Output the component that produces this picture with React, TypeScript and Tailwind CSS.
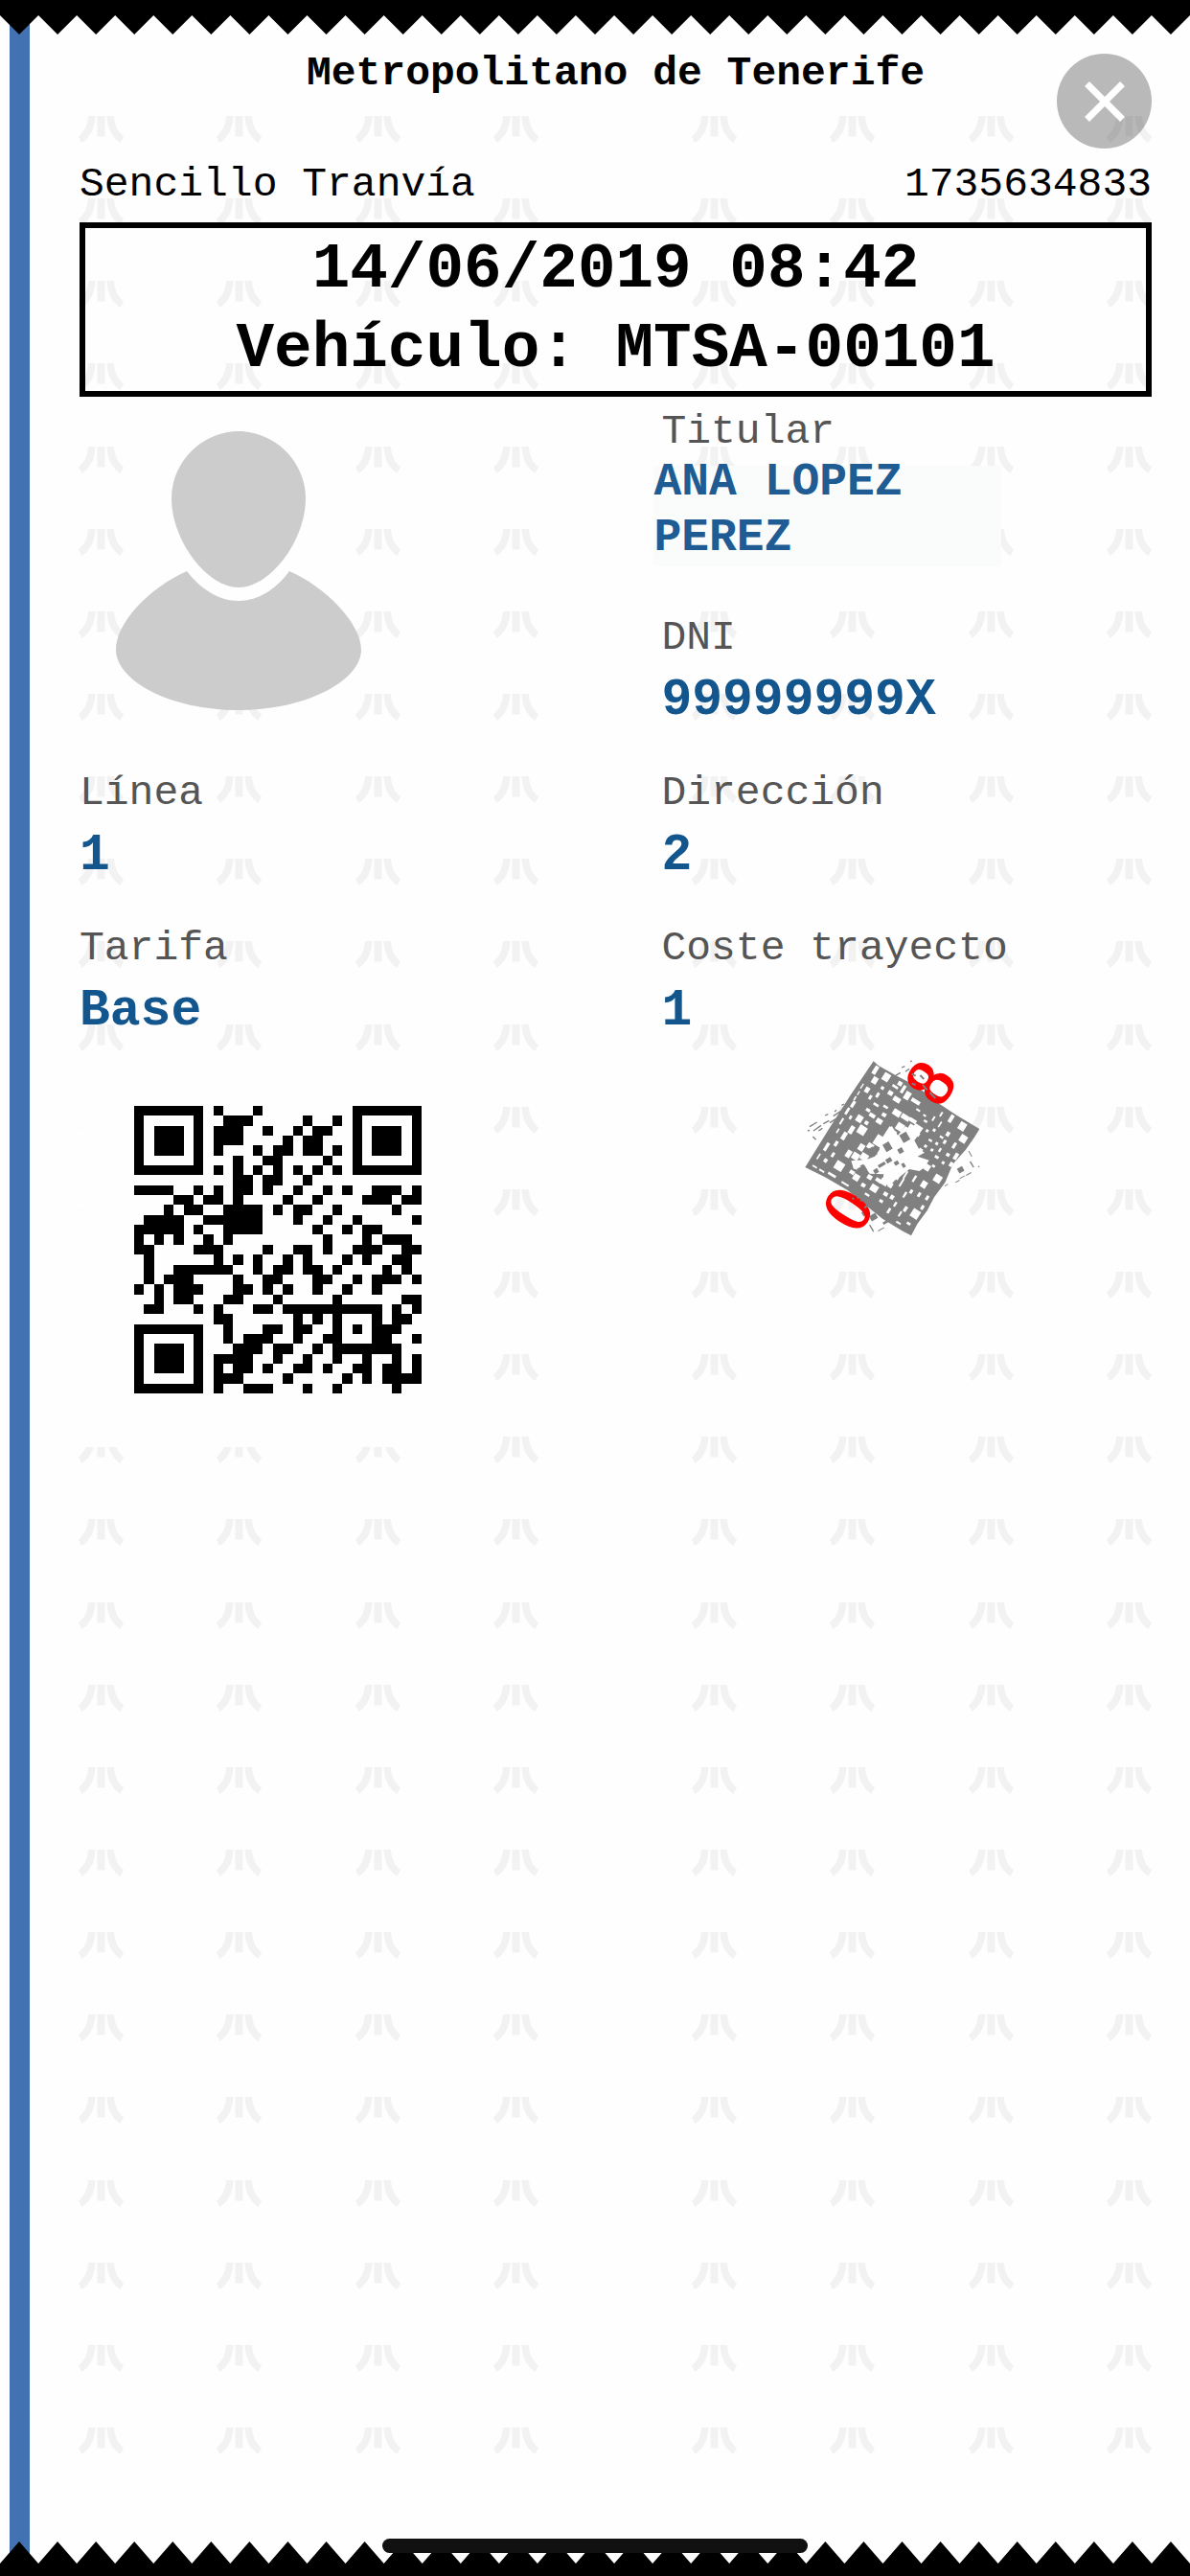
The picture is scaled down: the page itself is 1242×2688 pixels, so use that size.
import React from "react";

const TEETH = 31;

function zigzag(edge: number, tip: number) {
  let d = `M0 ${edge}`;
  for (let i = 0; i < TEETH; i++) d += `L${i * 40 + 20} ${tip}L${i * 40 + 40} ${edge}`;
  return d;
}

function TornEdge({ side }: { side: "top" | "bottom" }) {
  const d = side === "top" ? `${zigzag(16, 36)}V0H0Z` : `${zigzag(23, 0)}V36H0Z`;
  return (
    <svg viewBox="0 0 1240 36" preserveAspectRatio="none" className="block h-9 w-full" aria-hidden="true">
      <path d={d} fill="#000" />
    </svg>
  );
}

function Mark() {
  return (
    <svg viewBox="0 0 47 28" className="h-7 w-[47px]">
      <path
        fill="#f2f2f2"
        d="M10 0H17.5C17 12 13 21.5 3.5 28L0 21.5C6.5 16 9.5 9 10 0ZM19.5 0H27.5V21.5H19.5ZM29.5 0H37C37.5 9 40.5 16 47 21.5L43.5 28C34 21.5 30 12 29.5 0Z"
      />
    </svg>
  );
}

function Watermark() {
  const half = [0, 1, 2, 3];
  return (
    <div
      aria-hidden="true"
      className="absolute top-[121px] right-10 bottom-[127px] left-[82px] flex flex-col justify-between"
    >
      {Array.from({ length: 29 }, (_, row) => (
        <div key={row} className="grid grid-cols-2 gap-40">
          {[0, 1].map((side) => (
            <div key={side} className="flex justify-between">
              {half.map((i) => (
                <Mark key={i} />
              ))}
            </div>
          ))}
        </div>
      ))}
    </div>
  );
}

function Avatar() {
  return (
    <svg viewBox="0 0 258 292" className="mt-6 ml-[37px] h-[292px] w-[258px]" role="img" aria-label="Foto del titular">
      <g fill="#ccc">
        <path d="M129 0C167 0 199 32 199 70C199 114 162 163 129 163C96 163 59 114 59 70C59 32 91 0 129 0Z" />
        <path d="M75 146C89 164 108 177 129 177C150 177 169 164 182 146C219 162 257 200 257 228C257 260 200 291 129 291C57 291 1 260 1 228C1 200 35 164 75 146Z" />
      </g>
    </svg>
  );
}

/* Dark modules of each row, as inclusive column runs. */
const QR_ROWS = [
  "0-6 8 12 22-28",
  "0 6 9-11 17 20 22 28",
  "0 2-4 6 8-10 13 16 18-19 22 24-26 28",
  "0 2-4 6 8-10 15 17-18 22 24-26 28",
  "0 2-4 6 8 12 14-15 17-18 20 22 24-26 28",
  "0 6 10 13-14 19 22 28",
  "0-6 8 10 12 14 16 18 20 22-28",
  "10-11 13-14 17",
  "0-3 6 8 10-11 13 16 19 21 24-26 28",
  "4-5 7-8 10 15 18 23-25 27-28",
  "3 5-6 9-12 14 16-17 20 26",
  "1-4 7-12 16 19 22 28",
  "0-4 6 9-12 18 21 23-24",
  "0 2 4 7 9 19 23 25-27",
  "0-1 6-8 13 16-17 19 22-24 27-28",
  "1 8 10 12 15 17 21 23 26-27",
  "1 4-9 12 14-15 17-18 20 25 27",
  "1 3-5 10 13-14 18-19 22 24-26 28",
  "0 2 4-6 10-11 13 15 18 21 24",
  "2 4-5 9-10 14 20 27-28",
  "1-2 6 8 12-13 15-24 26 28",
  "8-9 16 18 20 24 26-27",
  "0-6 9 13-14 16-17 20 22 24-26",
  "0 6 9 11-13 16 19-20 24-25 28",
  "0 2-4 6 10-12 14-15 18 20-26",
  "0 2-4 6 8-11 14 17 20 23 26 28",
  "0 2-4 6 8 10-11 13 16-17 19 22-23 25-26 28",
  "0 6 8-10 15 21 23 25-28",
  "0-6 8 11-13 17 20 26",
];

const QR_PATH = QR_ROWS.map((row, y) =>
  row
    .split(" ")
    .map((run) => {
      const [from, to = from] = run.split("-").map(Number);
      return `M${from} ${y}H${to + 1}V${y + 1}H${from}Z`;
    })
    .join(""),
).join("");

function QrCode() {
  return (
    <div className="flex size-[413px] items-center justify-center bg-[#fefefe]">
      <svg viewBox="0 0 29 29" className="size-[300px]" shapeRendering="crispEdges" role="img" aria-label="Código QR">
        <path d={QR_PATH} fill="#000" />
      </svg>
    </div>
  );
}

/* Light cells of the seal: centre x, centre y, width, height. */
const SEAL_CELLS = [
  [278, 80, 13, 28], [312, 102, 22, 26], [276, 112, 17, 22], [252, 142, 14, 18], [285, 158, 9, 16],
  [300, 136, 10, 10], [262, 165, 9, 14], [236, 130, 4, 18], [225, 152, 4, 14], [214, 168, 5, 14],
  [208, 187, 10, 22], [190, 208, 8, 24], [228, 232, 20, 22], [203, 267, 14, 26], [236, 268, 26, 28],
  [200, 228, 8, 12], [172, 240, 6, 22], [180, 286, 13, 26], [160, 270, 5, 16], [155, 310, 10, 18],
  [125, 320, 10, 28], [145, 345, 9, 16], [122, 363, 11, 13], [100, 350, 5, 20], [165, 380, 28, 28],
  [194, 342, 16, 24], [142, 408, 28, 8], [110, 395, 18, 6], [183, 436, 26, 6], [88, 382, 16, 5],
  [355, 122, 14, 14], [378, 160, 18, 26], [345, 172, 24, 16], [325, 152, 16, 14], [404, 178, 30, 12],
  [365, 140, 10, 26], [340, 132, 20, 8], [255, 205, 14, 10], [280, 188, 18, 8], [310, 195, 16, 8],
  [268, 222, 20, 12], [290, 240, 20, 16], [305, 220, 14, 12], [250, 245, 12, 12], [345, 214, 26, 20],
  [372, 228, 28, 16], [395, 238, 24, 12], [355, 258, 24, 24], [330, 275, 26, 18], [292, 303, 34, 34],
  [262, 318, 20, 18], [234, 322, 18, 22], [216, 350, 22, 22], [243, 352, 24, 22], [395, 262, 28, 18],
  [408, 280, 18, 12], [435, 240, 12, 7], [460, 232, 6, 16], [484, 218, 6, 16], [480, 250, 5, 20],
  [462, 268, 9, 9], [440, 270, 9, 9], [515, 232, 12, 26], [550, 256, 22, 26], [553, 295, 22, 24],
  [525, 316, 9, 20], [505, 280, 11, 15], [485, 290, 12, 7], [495, 305, 9, 13], [470, 310, 9, 9],
  [450, 300, 12, 7], [435, 318, 9, 9], [455, 330, 9, 9], [480, 330, 7, 13], [505, 345, 11, 11],
  [470, 352, 13, 9], [530, 350, 12, 22], [515, 375, 11, 15], [490, 370, 9, 9], [440, 385, 18, 20],
  [473, 420, 24, 24], [430, 438, 18, 22], [400, 420, 7, 22], [372, 408, 6, 26], [360, 432, 6, 28],
  [350, 415, 6, 20], [390, 460, 9, 13], [370, 470, 7, 20], [415, 470, 9, 15], [440, 480, 9, 15],
  [403, 530, 26, 28], [425, 510, 9, 15], [372, 515, 10, 18], [382, 560, 13, 8], [350, 558, 16, 6],
  [355, 530, 6, 18], [340, 500, 7, 16], [320, 520, 8, 18], [330, 478, 12, 14], [310, 468, 14, 12],
  [274, 450, 24, 22], [252, 470, 16, 7], [296, 490, 12, 9], [288, 425, 20, 12], [260, 415, 16, 14],
  [218, 416, 20, 20], [240, 440, 14, 12], [205, 400, 16, 12], [222, 385, 20, 16], [305, 430, 24, 20],
  [325, 440, 14, 16], [412, 205, 14, 6], [432, 222, 10, 6], [420, 330, 12, 10], [460, 380, 10, 8],
];

/* Dark fragments over the light core and outside the border. */
const SEAL_CHIPS = [
  [357, 332, 16, 16], [316, 320, 22, 26], [344, 371, 14, 12], [320, 362, 18, 14], [298, 376, 24, 10],
  [370, 290, 24, 28], [330, 240, 28, 26], [366, 378, 10, 14], [268, 336, 22, 28], [236, 392, 28, 20],
  [280, 396, 14, 14], [545, 392, 18, 16], [580, 375, 4, 22], [570, 405, 18, 3], [550, 415, 18, 3],
  [575, 342, 3, 20], [602, 382, 4, 4], [535, 428, 14, 3], [500, 440, 12, 3], [272, 540, 22, 18],
  [266, 575, 4, 24], [296, 578, 22, 3], [240, 530, 6, 14], [310, 556, 18, 8],
];

const SEAL_DASHES =
  "M72 257L95 243M84 270L108 253M115 248L133 238M135 245L155 232M82 288L92 298M100 270L112 262M120 222L130 218M150 210L156 205M66 270L72 268M340 98L356 88M360 72L370 68M372 85L384 76M388 54L392 50M146 224L170 208M172 190L180 186";

function Seal() {
  return (
    <svg viewBox="54 45 555 558" className="h-[186px] w-[185px] overflow-visible" role="img" aria-label="Sello de validación 08">
      <path
        fill="#808080"
        d="M272 52L288 66L345 98L380 116L430 148L470 180L530 220L604 264L588 290L560 330L520 375L496 432L462 478L440 520L410 560L390 598L360 582L300 545L250 505L190 455L120 415L58 384L130 268L200 158Z"
      />
      <path
        fill="#fefefe"
        d="M326 250L348 284L372 256L390 266L404 246L428 262L412 284L400 300L414 326L432 338L410 350L446 362L432 384L416 396L384 390L362 408L340 424L322 444L300 430L304 406L260 404L240 374L210 390L202 364L250 360L276 350L290 330L300 290Z"
      />
      {SEAL_CELLS.map(([x, y, w, h]) => (
        <rect
          key={`${x}-${y}`}
          x={x - w / 2}
          y={y - h / 2}
          width={w}
          height={h}
          fill="#fefefe"
          transform={`rotate(32 ${x} ${y})`}
        />
      ))}
      {SEAL_CHIPS.map(([x, y, w, h]) => (
        <rect
          key={`${x}-${y}`}
          x={x - w / 2}
          y={y - h / 2}
          width={w}
          height={h}
          fill="#808080"
          transform={`rotate(-30 ${x} ${y})`}
        />
      ))}
      <path d={SEAL_DASHES} stroke="#808080" strokeWidth="4" fill="none" />
      <g
        className="font-['Liberation_Serif',serif] text-[210px]"
        fill="#f00"
        stroke="#f00"
        strokeWidth="6"
        textAnchor="middle"
      >
        <text transform="translate(191 514) rotate(-57)" y="70">0</text>
        <text transform="translate(449 119) rotate(-57)" y="70">8</text>
      </g>
      <path
        d="M222 482L232 468M232 490L244 474M244 512L256 498M206 480L210 484M392 92L404 98M418 96L430 108M426 126L440 142M448 150L466 168M392 122L404 126"
        stroke="#808080"
        strokeWidth="6"
      />
    </svg>
  );
}

function Field({ label, value }: { label: string; value: string }) {
  return (
    <div>
      <dt className="text-[43px] leading-[50px] text-[#555]">{label}</dt>
      <dd className="text-[53px] leading-[80px] font-bold text-[#13568d]">{value}</dd>
    </div>
  );
}

export default function App() {
  return (
    <div className="relative flex min-h-screen flex-col bg-[#fefefe] font-['Liberation_Mono',monospace] text-black">
      <div className="absolute inset-y-0 left-[10px] w-[21px] bg-[#4272b1]" aria-hidden="true" />
      <Watermark />

      <div className="relative">
        <TornEdge side="top" />
      </div>

      <main className="relative flex-1 pt-4 pr-10 pl-[83px]">
        <h1 className="text-center text-[43px] leading-[50px] font-bold">Metropolitano de Tenerife</h1>
        <button
          type="button"
          aria-label="Cerrar"
          className="absolute top-5 right-10 flex size-[99px] items-center justify-center rounded-full bg-black/[0.27]"
        >
          <svg viewBox="0 0 42 42" className="size-[42px]" aria-hidden="true">
            <path d="M2.5 2.5L39.5 39.5M39.5 2.5L2.5 39.5" stroke="#fff" strokeWidth="7" />
          </svg>
        </button>

        <div className="mt-[66px] flex justify-between text-[43px] leading-[50px]">
          <p>Sencillo Tranvía</p>
          <p>1735634833</p>
        </div>

        <div className="mt-[14px] border-[6px] border-black py-[2px] text-center text-[66px] leading-[83px] font-bold">
          <p>14/06/2019 08:42</p>
          <p>Vehículo: MTSA-00101</p>
        </div>

        <dl className="mt-3 grid grid-cols-[19fr_16fr] gap-y-8">
          <Avatar />
          <div>
            <dt className="text-[43px] leading-[50px] text-[#555]">Titular</dt>
            <dd className="mt-[10px] -ml-2 flex h-[105px] w-[363px] flex-col bg-[#fafcfb] text-[48px] leading-[58px] font-bold text-[#1f5c93]">
              <span className="-mt-3">ANA LOPEZ PEREZ</span>
            </dd>
            <div className="mt-[50px]">
              <Field label="DNI" value="99999999X" />
            </div>
          </div>
          <Field label="Línea" value="1" />
          <Field label="Dirección" value="2" />
          <Field label="Tarifa" value="Base" />
          <Field label="Coste trayecto" value="1" />
        </dl>

        <div className="mt-[2px] grid grid-cols-[19fr_16fr]">
          <QrCode />
          <div className="pt-2 pl-[149px]">
            <Seal />
          </div>
        </div>
      </main>

      <div className="relative">
        <TornEdge side="bottom" />
        <div className="absolute bottom-6 left-1/2 h-[15px] w-[444px] -translate-x-1/2 rounded-full bg-[#111]" />
      </div>
    </div>
  );
}
